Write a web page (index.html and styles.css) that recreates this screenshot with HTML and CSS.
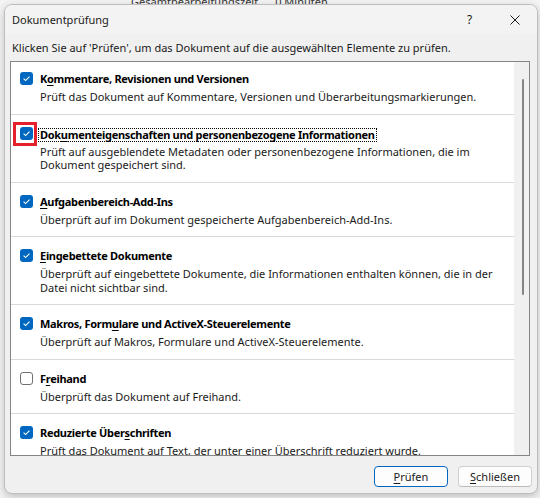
FILE: index.html
```html
<!DOCTYPE html>
<html lang="de">
<head>
<meta charset="utf-8">
<title>Dokumentprüfung</title>
<link rel="stylesheet" href="styles.css">
</head>
<body>
<div class="behind"><span>Gesamtbearbeitungszeit</span><span class="behind-val">0 Minuten</span></div>

<div class="dialog">
  <div class="titlebar">
    <span class="title">Dokumentprüfung</span>
    <span class="tb-btn">?</span>
    <span class="tb-btn"><svg width="10" height="10" viewBox="0 0 10 10"><path d="M0.5 0.5 L9.5 9.5 M9.5 0.5 L0.5 9.5" stroke="#1b1b1b" stroke-width="1" fill="none"/></svg></span>
  </div>
  <div class="intro">Klicken Sie auf 'Prüfen', um das Dokument auf die ausgewählten Elemente zu prüfen.</div>
  <div class="panel">
    <div class="list">
      <div class="item first">
        <span class="cb"><svg width="13" height="13" viewBox="0 0 13 13"><rect width="13" height="13" rx="3" fill="#0067c0"/><path d="M3.6 6.7 L5.6 8.6 L9.5 4.6" fill="none" stroke="#fff" stroke-width="1.1"/></svg></span>
        <div class="text">
          <div class="ttl">K<u>o</u>mmentare, Revisionen und Versionen</div>
          <div class="desc">Prüft das Dokument auf Kommentare, Versionen und Überarbeitungsmarkierungen.</div>
        </div>
      </div>
      <div class="item">
        <span class="cb"><svg width="13" height="13" viewBox="0 0 13 13"><rect width="13" height="13" rx="3" fill="#0067c0"/><path d="M3.6 6.7 L5.6 8.6 L9.5 4.6" fill="none" stroke="#fff" stroke-width="1.1"/></svg><span class="mark"></span></span>
        <div class="text">
          <div class="ttl"><span class="dotted">Dok<u>u</u>menteigenschaften und personenbezogene Informationen</span></div>
          <div class="desc">Prüft auf ausgeblendete Metadaten oder personenbezogene Informationen, die im<br>Dokument gespeichert sind.</div>
        </div>
      </div>
      <div class="item">
        <span class="cb"><svg width="13" height="13" viewBox="0 0 13 13"><rect width="13" height="13" rx="3" fill="#0067c0"/><path d="M3.6 6.7 L5.6 8.6 L9.5 4.6" fill="none" stroke="#fff" stroke-width="1.1"/></svg></span>
        <div class="text">
          <div class="ttl"><u>A</u>ufgabenbereich-Add-Ins</div>
          <div class="desc">Überprüft auf im Dokument gespeicherte Aufgabenbereich-Add-Ins.</div>
        </div>
      </div>
      <div class="item">
        <span class="cb"><svg width="13" height="13" viewBox="0 0 13 13"><rect width="13" height="13" rx="3" fill="#0067c0"/><path d="M3.6 6.7 L5.6 8.6 L9.5 4.6" fill="none" stroke="#fff" stroke-width="1.1"/></svg></span>
        <div class="text">
          <div class="ttl"><u>E</u>ingebettete Dokumente</div>
          <div class="desc">Überprüft auf eingebettete Dokumente, die Informationen enthalten können, die in der<br>Datei nicht sichtbar sind.</div>
        </div>
      </div>
      <div class="item">
        <span class="cb"><svg width="13" height="13" viewBox="0 0 13 13"><rect width="13" height="13" rx="3" fill="#0067c0"/><path d="M3.6 6.7 L5.6 8.6 L9.5 4.6" fill="none" stroke="#fff" stroke-width="1.1"/></svg></span>
        <div class="text">
          <div class="ttl">Makros, Form<u>u</u>lare und ActiveX-Steuerelemente</div>
          <div class="desc">Überprüft auf Makros, Formulare und ActiveX-Steuerelemente.</div>
        </div>
      </div>
      <div class="item">
        <span class="cb"><svg width="13" height="13" viewBox="0 0 13 13"><rect x="0.5" y="0.5" width="12" height="12" rx="2.5" fill="#fff" stroke="#707070"/></svg></span>
        <div class="text">
          <div class="ttl">F<u>r</u>eihand</div>
          <div class="desc">Überprüft das Dokument auf Freihand.</div>
        </div>
      </div>
      <div class="item">
        <span class="cb"><svg width="13" height="13" viewBox="0 0 13 13"><rect width="13" height="13" rx="3" fill="#0067c0"/><path d="M3.6 6.7 L5.6 8.6 L9.5 4.6" fill="none" stroke="#fff" stroke-width="1.1"/></svg></span>
        <div class="text">
          <div class="ttl">Reduzierte Über<u>s</u>chriften</div>
          <div class="desc">Prüft das Dokument auf Text, der unter einer Überschrift reduziert wurde.</div>
        </div>
      </div>
    </div>
    <div class="scrollbar"><div class="thumb"></div></div>
  </div>
  <div class="footer">
    <button class="btn default"><u>P</u>rüfen</button>
    <button class="btn"><u>S</u>chließen</button>
  </div>
</div>
</body>
</html>
```
FILE: styles.css
```css
* { box-sizing: border-box; }
html, body { margin: 0; padding: 0; }
body {
  width: 540px;
  height: 498px;
  overflow: hidden;
  background: #f4f4f4;
  font-family: "Segoe UI", "Noto Sans", sans-serif;
  font-size: 11px;
  color: #1a1a1a;
  position: relative;
}
.behind {
  margin-top: -6px;
  padding-left: 131px;
  line-height: 16px;
  font-size: 11px;
  color: #333;
  white-space: nowrap;
}
.behind-val { margin-left: 17px; }

.dialog {
  position: absolute;
  left: 4px;
  top: 4px;
  width: 534px;
  height: 490px;
  background: #f0f0f0;
  border: 1px solid #bdbdbd;
  border-radius: 8px;
  box-shadow: 0 3px 10px rgba(0,0,0,0.22);
  display: flex;
  flex-direction: column;
  overflow: hidden;
}
.titlebar {
  height: 29px;
  flex: none;
  display: flex;
  align-items: center;
  padding-left: 7px;
  background: #f3f3f3;
}
.title { flex: 1; color: #1a1a1a; font-size: 11px; }
.tb-btn {
  width: 45px;
  height: 29px;
  display: flex;
  align-items: center;
  justify-content: center;
  color: #1b1b1b;
  font-size: 12px;
}
.intro {
  margin-top: 6px;
  line-height: 16px;
  padding-left: 7px;
  white-space: nowrap;
}
.panel {
  margin: 5px 7px 0 5px;
  height: 395px;
  flex: none;
  border: 1px solid #858585;
  background: #fff;
  display: flex;
  overflow: hidden;
}
.list {
  flex: 1;
  overflow: hidden;
}
.item {
  display: flex;
  align-items: flex-start;
  gap: 7px;
  padding: 11px 0 10px 9px;
  border-top: 1px solid #d9d9d9;
}
.item.first {
  border-top: none;
  padding-top: 9px;
}
.cb {
  flex: none;
  width: 13px;
  height: 13px;
  margin-top: 1px;
  position: relative;
  display: block;
}
.cb svg { display: block; }
.mark {
  position: absolute;
  left: -7px;
  top: -5px;
  width: 24px;
  height: 24px;
  border: 3px solid #e3202b;
}
.text { min-width: 0; }
.ttl {
  font-weight: bold;
  line-height: 16px;
  color: #000;
  white-space: nowrap;
  letter-spacing: -0.3px;
}
.dotted {
  display: inline-block;
  line-height: 12px;
  border: 1px dotted #000;
  padding: 0 1px;
  margin-left: -2px;
  vertical-align: middle;
}
.desc {
  margin-top: 3px;
  line-height: 13.5px;
  white-space: nowrap;
}
u { text-decoration-thickness: 1px; text-underline-offset: 2px; }
.scrollbar {
  width: 15px;
  flex: none;
  background: #f0f0f0;
  position: relative;
}
.thumb {
  margin: 17px 0 0 8px;
  width: 2px;
  height: 216px;
  border-radius: 1px;
  background: #858585;
}
.footer {
  display: flex;
  justify-content: flex-end;
  gap: 10px;
  padding: 10px 5px 0 0;
}
.btn {
  width: 74px;
  height: 21px;
  font-family: inherit;
  font-size: 11px;
  color: #1a1a1a;
  background: #fdfdfd;
  border: 1px solid #d0d0d0;
  border-bottom-color: #bcbcbc;
  border-radius: 4px;
  padding: 0;
  line-height: 17px;
}
.btn.default {
  border: 1px solid #0067c0;
}
```
